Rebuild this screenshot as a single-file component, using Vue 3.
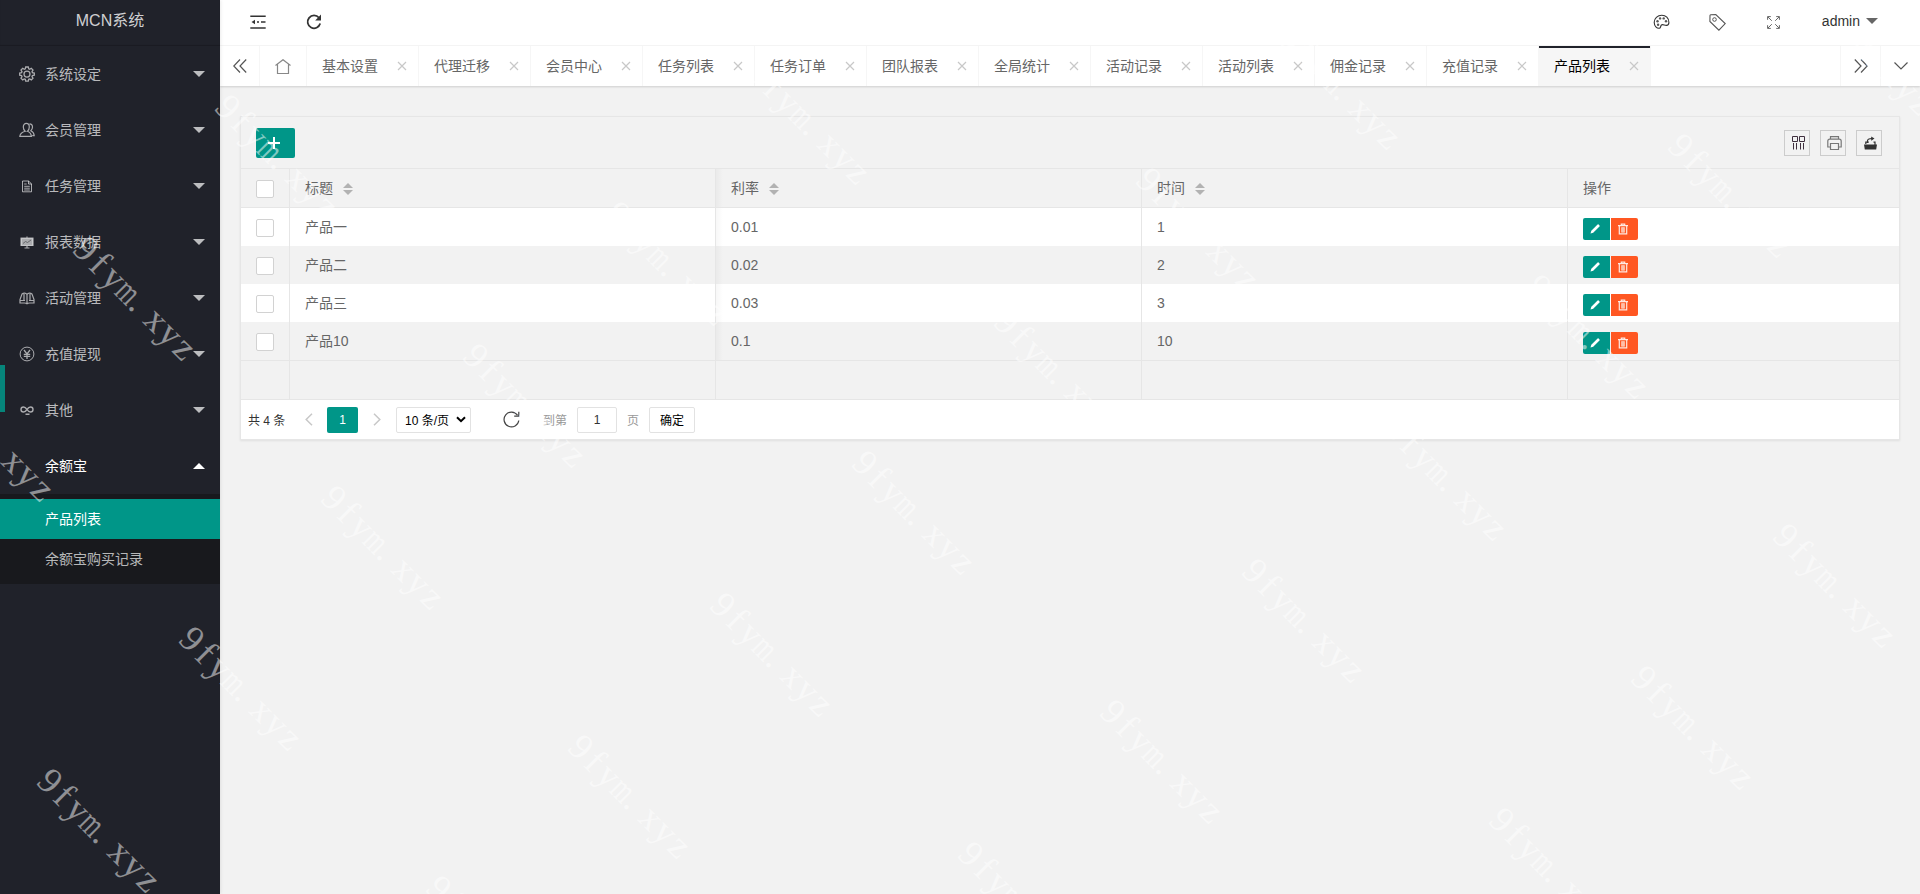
<template>
  <div class="layout">
    <aside class="side">
      <div class="logo">MCN系统</div>
      <ul class="nav">
        <li v-for="m in menus" :key="m.title" class="nav-item" :class="{ open: m.children }">
          <a class="nav-link">
            <svg class="nav-icon" viewBox="0 0 16 16" v-html="icons[m.icon]"></svg>
            <span>{{ m.title }}</span>
            <i class="caret"></i>
          </a>
          <div v-if="m.children" class="nav-child">
            <a v-for="c in m.children" :key="c" :class="{ active: c === current }">{{ c }}</a>
          </div>
        </li>
      </ul>
      <span class="nav-bar"></span>
    </aside>

    <div class="main">
      <header class="header">
        <a class="head-btn"><svg width="16" height="14" viewBox="0 0 16 14" v-html="icons.shrink"></svg></a>
        <a class="head-btn"><svg width="16" height="16" viewBox="0 0 16 16" v-html="icons.reload"></svg></a>
        <div class="head-right">
          <a class="head-btn"><svg width="17" height="16" viewBox="0 0 16 16" v-html="icons.theme"></svg></a>
          <a class="head-btn"><svg width="17" height="17" viewBox="0 0 17 17" v-html="icons.tag"></svg></a>
          <a class="head-btn"><svg width="13" height="13" viewBox="0 0 13 13" v-html="icons.full"></svg></a>
          <a class="user">admin<i class="caret"></i></a>
        </div>
      </header>

      <nav class="tabs">
        <a class="tab-ctrl prev"><svg width="14" height="14" viewBox="0 0 14 14"><path d="M7 .5 .8 7 7 13.500M13.200 .5 7 7l6.200 6.500" /></svg></a>
        <a class="tab-home"><svg width="16" height="15" viewBox="0 0 16 15"><path d="M.5 6.500 8 .7l7.500 5.800M2.500 5.500v9h11v-9" /></svg></a>
        <a v-for="t in tabs" :key="t" class="tab" :class="{ active: t === current }">
          {{ t }}<svg class="close" viewBox="0 0 10 10"><path d="M1 1l8 8M9 1 1 9" /></svg>
        </a>
        <a class="tab-ctrl next"><svg width="14" height="14" viewBox="0 0 14 14"><path d="M.8 .5 7 7 .8 13.500M7 .5 13.200 7 7 13.500" /></svg></a>
        <a class="tab-ctrl last"><svg width="14" height="8" viewBox="0 0 14 8"><path d="M.5 .5 7 7l6.500-6.500" /></svg></a>
      </nav>

      <section class="card">
        <div class="toolbar">
          <button class="btn-add"><svg width="12" height="12" viewBox="0 0 12 12"><path d="M6 0v12M0 6h12" /></svg></button>
          <div class="tools">
            <a v-for="k in ['cols', 'print', 'export']" :key="k"><svg width="16" height="16" viewBox="0 0 16 16" v-html="icons[k]"></svg></a>
          </div>
        </div>

        <table class="grid">
          <colgroup><col class="c-check" /><col class="c-data" /><col class="c-data" /><col class="c-data" /><col /></colgroup>
          <thead>
            <tr>
              <th><i class="check"></i></th>
              <th v-for="h in ['标题', '利率', '时间']" :key="h"><div class="head-cell">{{ h }}<span class="sort"><i></i><i></i></span></div></th>
              <th>操作</th>
            </tr>
          </thead>
          <tbody>
            <tr v-for="r in rows" :key="r.title">
              <td><i class="check"></i></td>
              <td>{{ r.title }}</td>
              <td>{{ r.rate }}</td>
              <td>{{ r.days }}</td>
              <td>
                <div class="ops">
                  <button class="op edit"><svg width="12" height="12" viewBox="0 0 12 12"><path d="M1.500 10.500l.8-2.700L8.600 1.500q.5-.5 1 0l.9.9q.5.500 0 1L4.200 9.700z" fill="#fff" /></svg></button>
                  <button class="op del"><svg width="12" height="12" viewBox="0 0 12 12" v-html="icons.trash"></svg></button>
                </div>
              </td>
            </tr>
          </tbody>
          <tfoot><tr><td v-for="n in 5" :key="n"></td></tr></tfoot>
        </table>

        <div class="pager">
          <span class="total">共 4 条</span>
          <svg class="arrow" width="8" height="13" viewBox="0 0 8 13"><path d="M7 .8 1.200 6.500 7 12.200" /></svg>
          <span class="page">1</span>
          <svg class="arrow" width="8" height="13" viewBox="0 0 8 13"><path d="M1 .8l5.800 5.700L1 12.200" /></svg>
          <span class="limit">10 条/页<svg width="10" height="7" viewBox="0 0 10 7"><path d="M1 1.200 5 5.200l4-4" /></svg></span>
          <svg class="refresh" width="17" height="17" viewBox="0 0 17 17"><path d="M15.800 9.500A7.400 7.400 0 1 1 14.500 4.200M15.800 .8v4.400h-4.600" /></svg>
          <span class="muted">到第</span>
          <input v-model="page" class="page-input" />
          <span class="muted">页</span>
          <button class="btn-go">确定</button>
        </div>
      </section>
    </div>

    <div class="marks">
      <div v-for="(p, i) in marks" :key="i" class="mark" :style="{ left: p.x + 'px', top: p.y + 'px' }">
        <span v-for="(ch, n) in '9fym.xyz'" :key="n" :class="{ wide: ch === 'm', dot: ch === '.' }">{{ ch }}</span>
      </div>
    </div>
  </div>
</template>

<script setup>
import { ref } from 'vue'

const current = ref('产品列表')
const page = ref('1')

const menus = [
  { title: '系统设定', icon: 'gear' },
  { title: '会员管理', icon: 'user' },
  { title: '任务管理', icon: 'file' },
  { title: '报表数据', icon: 'board' },
  { title: '活动管理', icon: 'book' },
  { title: '充值提现', icon: 'yen' },
  { title: '其他', icon: 'link' },
  { title: '余额宝', icon: '', children: ['产品列表', '余额宝购买记录'] }
]

const tabs = ['基本设置', '代理迁移', '会员中心', '任务列表', '任务订单', '团队报表', '全局统计', '活动记录', '活动列表', '佣金记录', '充值记录', '产品列表']

const rows = [
  { title: '产品一', rate: '0.01', days: 1 },
  { title: '产品二', rate: '0.02', days: 2 },
  { title: '产品三', rate: '0.03', days: 3 },
  { title: '产品10', rate: '0.1', days: 10 }
]

const icons = {
  '': '',
  gear: '<path d="M6.700 1h2.600l.4 1.900 1 .4 1.600-1 1.700 1.700-1 1.600.4 1 1.900.4v2.200l-1.900.4-.4 1 1 1.600-1.700 1.700-1.600-1-1 .4-.4 1.900H6.700l-.4-1.900-1-.4-1.600 1L2 12.200l1-1.600-.4-1L.7 9.200V7l1.900-.4.4-1L2 4l1.700-1.700 1.600 1 1-.4z" stroke-width="1.300"/><circle cx="8" cy="8.100" r="3" stroke-width="1.300"/>',
  user: '<path d="M6.200 9.200C4.800 8 4.300 6.500 4.300 5c0-2.200 1.300-3.600 3-3.600s3 1.400 3 3.600c0 1.500-.5 3-1.800 4.200 2.500 1 3.700 2.300 3.900 5.200H.8c.1-3 2.200-4.200 5.400-5.200zM10.500 1.800c1.800 0 3 1.300 3 3.200 0 1.500-.6 2.600-1.600 3.700 2 .9 3.200 2.300 3.300 4.900h-2" stroke-width="1.200"/>',
  file: '<path d="M3.500 3h6l3 2.800v8h-9zM9.500 3v3h3M5.200 6h2.500M5.200 8.300h5.600M5.200 10.200h5.600M5.200 12h5.600"/>',
  board: '<path d="M2 4.500h12v7H2zM1.500 4h13M8 11v3M5.500 14h5M8 2.500V4" fill="currentColor" stroke-width="1.200"/><path d="M4 9.500l2.500-2 2 1 3.500-2.500" stroke="#55575c" stroke-width=".8"/>',
  book: '<path d="M8 4.300C6.800 2.800 4.500 2.800 3 4L1 9.500V13h4.500q1.500 0 2.500.8 1-.8 2.500-.8H15V9.500L13 4C11.500 2.800 9.200 2.800 8 4.300zM8 4.500v8.500M5 4v6.500M11 4v6.500M1.500 10.500H6M10 10.500h4.500" stroke-width="1.200"/>',
  yen: '<circle cx="8" cy="8" r="6.900"/><path d="M5 4l3 4 3-4M8 8v5M4.800 8.300h6.400M4.800 10.400h6.400" stroke-width="1.300"/>',
  link: '<path d="M8 7.500C6.800 5.800 5.800 5 4.500 5a2.500 2.500 0 0 0 0 5C6 10 7 9 8 7.500S10 5 11.500 5a2.500 2.500 0 0 1 0 5C10 10 9 9.200 8 7.500zM6.500 12.200h4" stroke-width="1.400"/>',
  shrink: '<path d="M.3 1.200h15.400M.3 12.900h15.400M7 7h2M11 7h4.500" stroke="#333" stroke-width="1.500"/><path d="M1.500 7 5 4.700v4.600z" fill="#333"/>',
  reload: '<path d="M14.200 9.600A6.400 6.400 0 1 1 13 3.800" fill="none" stroke="#333" stroke-width="1.800"/><path d="M15 .6v6H9.200z" fill="#333"/>',
  theme: '<path d="M8.300 1.200C4 1.200.7 4.400.7 8.300c0 3.700 2.700 6.300 5.200 5.900 1.600-.3 1-2.300 2-3.200 1.500-1.200 3 .5 5 .4 1.600-.1 2.500-1 2.500-3 0-4.200-3.100-7.200-7.100-7.200z" fill="none" stroke="#333" stroke-width="1.100"/><g fill="#555"><circle cx="4" cy="7.200" r="1.200"/><circle cx="6.600" cy="4.400" r="1.200"/><circle cx="10.200" cy="4.400" r="1.200"/><circle cx="12.500" cy="7.200" r="1.200"/><circle cx="4.600" cy="10.700" r="1.200"/></g>',
  tag: '<path d="M1 1.600Q1 .9 1.700 .8L6.800 .6 16.200 9.600 9.900 16.200 .9 7.500z" fill="none" stroke="#555" stroke-width="1.100"/><circle cx="5.500" cy="5.500" r="1.800" fill="none" stroke="#555"/>',
  full: '<path d="M.6 3.800V.6h3.200M9.200.6h3.200v3.200M.6 9.200v3.200h3.200M12.400 9.200v3.200H9.200M.8.8l4 4M12.200.8l-4 4M.8 12.200l4-4M12.200 12.200l-4-4" fill="none" stroke="#666" stroke-width="1"/>',
  cols: '<path d="M2.500 1.500h5v5h-5zM9.500 1.500h5v5h-5zM3.500 8v6.500M6.500 8v6.500M10.500 8v6.500M13.500 8v6.500" fill="none" stroke="#40303f" stroke-width="1"/>',
  print: '<path d="M4.500 4V1.700h8V4M4 12H1.800V6.200q0-2 2-2h9.400q2 0 2 2V12H13M4.500 8.500h8v6h-8z" fill="none" stroke="#777" stroke-width="1.200"/>',
  export: '<path d="M2 9.500h13l-.8 5H2.800z" fill="#333"/><path d="M3.800 9V7.200h3M13 10V7.200h-1.500M5.500 8V5.800C5.500 4 7.500 3.500 10 3.500" fill="none" stroke="#333" stroke-width="1.200"/><path d="M9.200 1.500 12.500 3.600 9.200 5.700z" fill="#333"/>',
  trash: '<path d="M1 2.700h10M4.300 2.500V1.200h3.400v1.300M2.300 3v7.800h7.400V3" fill="none" stroke="#ffe9e2" stroke-width="1.200"/><path d="M4.500 4.500h3v4.800h-3z" fill="#ffc0a8" stroke="#ffd2c2" stroke-width=".6"/>'
}

// diagonal lattice of marks laid over the whole page
const marks = []
for (let i = -1; i <= 5; i++) {
  for (let j = -5; j <= 7; j++) {
    const x = 86 + 389.6 * i - 142 * j
    const y = 248.5 + 107.4 * i + 141.7 * j
    if (x > -90 && x < 1915 && y > 0 && y < 890) marks.push({ x: x - 10, y: y - 20 })
  }
}
</script>

<style>
html, body { height: 100%; overflow: hidden; }
</style>

<style scoped>
* { box-sizing: border-box; }
.layout { position: relative; display: flex; width: 100%; height: 100vh; overflow: hidden; background: #f2f2f2; color: #666; font: 14px "Liberation Sans", "Noto Sans CJK SC", sans-serif; }
svg { fill: none; flex: none; }
i { font-style: normal; }
button { border: 0; padding: 0; font: inherit; }

.side { position: relative; z-index: 2; width: 220px; flex: none; background: #20222a; color: rgba(255,255,255,.7); box-shadow: 1px 0 3px rgba(0,0,0,.08); }
.logo { height: 46px; line-height: 42px; text-align: center; font-size: 16px; color: rgba(255,255,255,.8); box-shadow: inset 0 -1px 1px rgba(0,0,0,.2); }
.nav { list-style: none; margin: 0; padding: 0; }
.nav-link { display: flex; align-items: center; height: 56px; padding: 0 15px 0 19px; }
.nav-link span { margin-top: -2px; }
.nav-icon { width: 16px; height: 16px; margin-right: 10px; stroke: currentColor; color: rgba(255,255,255,.62); }
.caret { width: 0; border: 6px solid transparent; border-top-color: currentColor; border-bottom: 0; }
.nav-link .caret { margin-left: auto; }
.open .nav-link { color: #fff; }
.open .caret { transform: rotate(180deg); }
.nav-child { padding: 5px 0; background: #18191d; }
.nav-child a { display: block; height: 40px; line-height: 40px; padding-left: 45px; }
.nav-child .active { background: #009688; color: #fff; }
.nav-bar { position: absolute; left: 0; top: 365px; width: 5px; height: 47px; background: #06857a; }

.main { flex: 1; min-width: 0; }
.header { display: flex; height: 46px; padding-left: 10px; background: #fff; border-bottom: 1px solid #f6f6f6; }
.head-btn { display: flex; align-items: center; justify-content: center; width: 56px; height: 44px; }
.head-right { display: flex; margin-left: auto; }
.user { position: relative; z-index: 6; display: flex; align-items: center; gap: 6px; height: 42px; padding: 0 42px 0 20px; color: #333; }
.user .caret { color: #666; }

.tabs { display: flex; height: 40px; background: #fff; box-shadow: 0 1px 2px rgba(0,0,0,.15); position: relative; }
.tabs svg { stroke: #555; stroke-width: 1.200; }
.tab-ctrl, .tab-home { display: flex; align-items: center; justify-content: center; width: 40px; }
.prev { border-right: 1px solid #f6f6f6; }
.next { margin-left: auto; width: 41px; border-left: 1px solid #f6f6f6; border-right: 1px solid #f6f6f6; }
.last { width: 39px; }
.tab-home { width: 47px; border-right: 1px solid #f6f6f6; }
.tabs .tab-home svg { stroke: #888; }
.tab { position: relative; width: 112px; padding-left: 15px; line-height: 40px; border-right: 1px solid #f6f6f6; white-space: nowrap; }
.tabs .close { position: absolute; left: 90px; top: 15px; width: 10px; height: 10px; stroke: #c8c8c8; }
.tab.active { background: #f6f6f6; color: #000; }
.tab.active::after { content: ""; position: absolute; left: 0; top: 0; width: 100%; height: 2px; background: #20222a; }

.card { margin: 30px 20px 0; border: 1px solid #e6e6e6; box-shadow: 0 1px 2px rgba(0,0,0,.08); }
.toolbar { display: flex; align-items: center; justify-content: space-between; height: 52px; padding: 0 17px 0 15px; border-bottom: 1px solid #e6e6e6; }
.btn-add { width: 39px; height: 30px; background: #009688; border-radius: 2px; padding-right: 3px; }
.btn-add svg { display: block; margin: 0 auto; stroke: #fff; stroke-width: 2; }
.tools { display: flex; gap: 10px; }
.tools a { display: flex; align-items: center; justify-content: center; width: 26px; height: 26px; padding-left: 2px; border: 1px solid #ccc; }

.grid { width: 100%; table-layout: fixed; border-collapse: separate; border-spacing: 0; }
.c-check { width: 49px; }
.c-data { width: 426px; }
.grid th, .grid td { height: 38px; padding: 0 15px; text-align: left; font-weight: 400; line-height: 20px; border-right: 1px solid #e6e6e6; }
.grid th:last-child, .grid td:last-child { border-right: 0; }
.grid th { height: 39px; border-bottom: 1px solid #e6e6e6; }
.grid tbody tr:nth-child(odd) { background: #fff; }
.grid tbody tr:last-child td { height: 39px; border-bottom: 1px solid #e6e6e6; }
.grid tfoot td { height: 39px; border-bottom: 1px solid #e6e6e6; }
.grid th:nth-child(3), .grid tbody td:nth-child(3) { background: linear-gradient(to right, rgba(0,0,0,.03), transparent) 0 0 / 7px 100% no-repeat; }
.check { display: block; width: 18px; height: 18px; background: #fff; border: 1px solid #d2d2d2; border-radius: 2px; position: relative; top: 1px; }
.head-cell { display: flex; align-items: center; }
.sort { display: flex; flex-direction: column; gap: 2px; margin: 1px 0 0 10px; }
.sort i { border: 5px solid transparent; border-top: 0; border-bottom-color: #b2b2b2; }
.sort i + i { border-top: 5px solid #b2b2b2; border-bottom: 0; }
.ops { display: flex; gap: 1px; padding-top: 4px; }
.op { display: flex; align-items: center; justify-content: center; width: 27px; height: 22px; padding-right: 3px; }
.edit { background: #009688; border-radius: 2px 0 0 2px; }
.del { background: #ff5722; border-radius: 0 2px 2px 0; }

.pager { display: flex; align-items: center; height: 39px; padding: 0 7px; background: #fff; font-size: 12px; color: #333; }
.total { width: 38px; margin-right: 19px; white-space: nowrap; }
.arrow { stroke: #c8c8c8; stroke-width: 1.500; }
.page { width: 31px; height: 26px; line-height: 26px; margin: 0 15px 0 14px; text-align: center; background: #009688; color: #fff; border-radius: 2px; }
.limit { display: flex; align-items: center; justify-content: space-between; width: 75px; height: 26px; margin: 0 32px 0 15px; padding: 0 4px 0 8px; border: 1px solid #e2e2e2; border-radius: 2px; color: #000; white-space: nowrap; }
.limit svg { stroke: #000; stroke-width: 2; }
.refresh { stroke: #444; stroke-width: 1.200; margin-right: 23px; }
.muted { color: #999; }
.page-input { width: 40px; height: 26px; margin: 0 10px; padding: 0; border: 1px solid #e2e2e2; border-radius: 2px; text-align: center; font: inherit; color: #333; }
.btn-go { width: 46px; height: 26px; margin-left: 10px; background: #fff; border: 1px solid #e2e2e2; border-radius: 2px; color: #000; }

.marks { position: absolute; inset: 0; z-index: 5; overflow: hidden; pointer-events: none; }
.mark { position: absolute; display: flex; width: 160px; height: 40px; line-height: 40px; transform: rotate(45deg); transform-origin: 10px 20px; font-family: "Liberation Serif", serif; font-size: 37px; color: rgba(255,255,255,.5); }
.mark span { width: 20px; display: flex; justify-content: center; }
.mark .wide { transform: scaleX(.66); }
.mark .dot { justify-content: flex-start; }
</style>
